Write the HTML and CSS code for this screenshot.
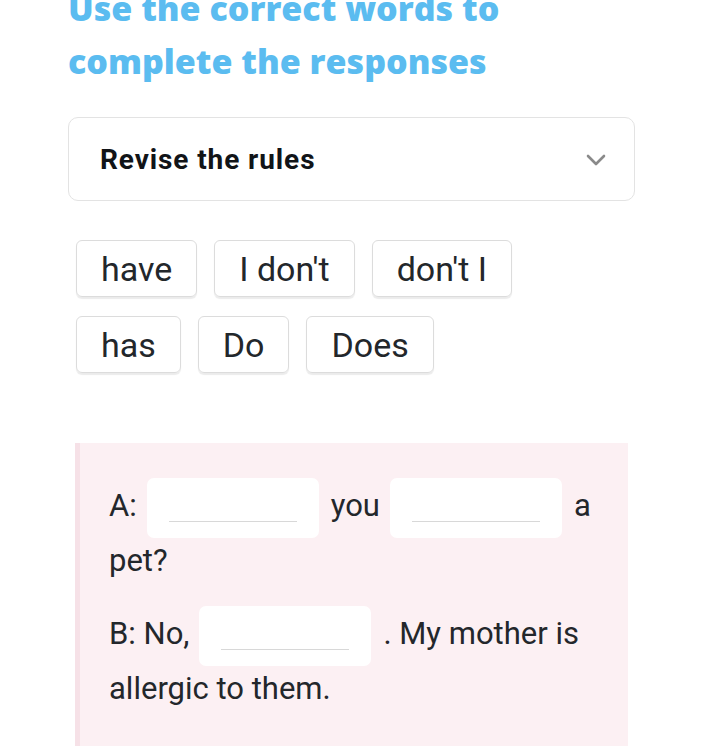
FILE: index.html
```html
<!DOCTYPE html>
<html lang="en">
<head>
<meta charset="utf-8">
<title>Exercise</title>
<link rel="stylesheet" href="styles.css">
</head>
<body>
<main class="page">
  <h1 class="title">Use the correct words to complete the responses</h1>

  <div class="rules">
    <span class="rules-label">Revise the rules</span>
    <svg class="chevron" width="20" height="12" viewBox="0 0 20 12"><path d="M2 2 L10 10 L18 2" fill="none" stroke="#8a8a8a" stroke-width="2.6" stroke-linecap="round" stroke-linejoin="round"/></svg>
  </div>

  <div class="chips">
    <span class="chip">have</span>
    <span class="chip">I don't</span>
    <span class="chip">don't I</span>
    <span class="chip">has</span>
    <span class="chip">Do</span>
    <span class="chip">Does</span>
  </div>

  <section class="card">
    <p class="line">A:<span class="blank"><span class="rule"></span></span>you<span class="blank"><span class="rule"></span></span>a pet?</p>
    <p class="line">B: No,<span class="blank"><span class="rule"></span></span>. My mother is allergic to them.</p>
  </section>
</main>
</body>
</html>
```
FILE: styles.css
```css
html, body {
  margin: 0;
  padding: 0;
  background: #ffffff;
}

body {
  font-family: "Roboto", "Liberation Sans", sans-serif;
  color: #23272b;
}

.page {
  width: 567px;
  margin-left: 68px;
}

.title {
  margin: -18px 0 0 0;
  font-family: "Open Sans", sans-serif;
  font-weight: 800;
  font-size: 34px;
  line-height: 53px;
  color: #5bbcf0;
}

.rules {
  margin-top: 29px;
  height: 82px;
  border: 1.5px solid #e3e3e3;
  border-radius: 10px;
  display: flex;
  align-items: center;
  justify-content: space-between;
  padding: 0 28px 0 31px;
}

.rules-label {
  font-weight: 700;
  font-size: 28px;
  letter-spacing: 0.9px;
  color: #111418;
}

.chevron {
  margin-top: 2px;
}

.chips {
  margin-top: 39px;
  padding-left: 8px;
  width: 470px;
  display: flex;
  flex-wrap: wrap;
  column-gap: 17px;
  row-gap: 19px;
}

.chip {
  height: 55px;
  padding: 0 24px;
  border: 1px solid #dcdcdc;
  border-radius: 6px;
  box-shadow: 0 2px 1px rgba(0, 0, 0, 0.08);
  display: flex;
  align-items: center;
  font-size: 34px;
  color: #23272b;
}

.chip-narrow {
  padding: 0 22px;
}

.card {
  box-sizing: border-box;
  height: 303px;
  margin: 70px 7px 0 7px;
  background: #fcf0f3;
  border-left: 5px solid #f6e1e7;
  padding: 35px 20px 0 29px;
}

.line {
  margin: 0 0 18px 0;
  font-size: 31px;
  line-height: 55px;
}

.blank {
  display: inline-block;
  vertical-align: middle;
  width: 172px;
  height: 60px;
  margin: -6px 12px -6px 10px;
  background: #ffffff;
  border-radius: 7px;
  position: relative;
}

.rule {
  position: absolute;
  left: 22px;
  right: 22px;
  top: 43px;
  height: 1.5px;
  background: #d8d8d8;
}
```
